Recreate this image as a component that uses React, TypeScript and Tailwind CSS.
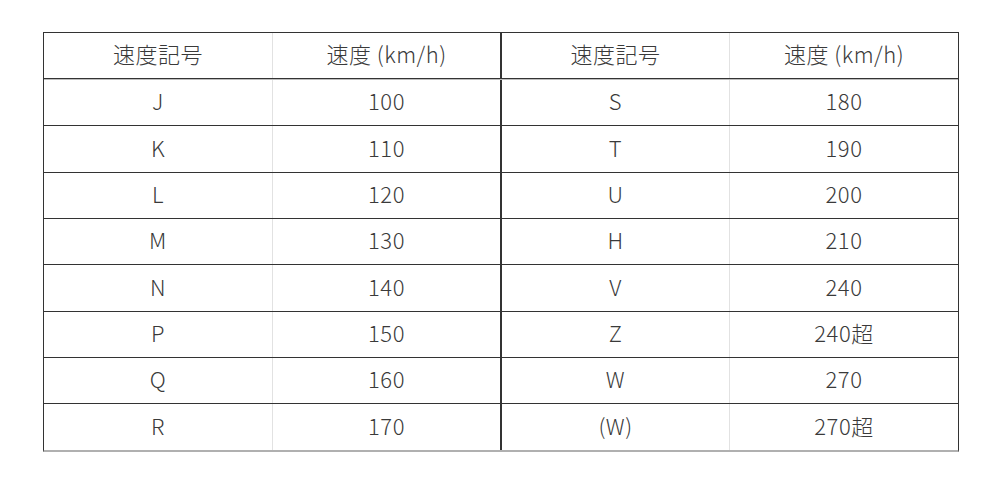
import React from "react";

// Speed symbol table: two symbol/speed pairs per row.
const ROWS: [string, string, string, string][] = [
  ["J", "100", "S", "180"],
  ["K", "110", "T", "190"],
  ["L", "120", "U", "200"],
  ["M", "130", "H", "210"],
  ["N", "140", "V", "240"],
  ["P", "150", "Z", "240超"],
  ["Q", "160", "W", "270"],
  ["R", "170", "(W)", "270超"],
];

const HEIGHTS = ["h-[46px]", "h-[47px]", "h-[46px]", "h-[46px]", "h-[47px]", "h-[46px]", "h-[46px]", "h-[46px]"];

function Row({ cells, height, last }: { cells: string[]; height: string; last?: boolean }) {
  return (
    <div className={`flex ${height} ${last ? "" : "border-b border-[#333]"}`}>
      <div className="w-[229px] border-r border-[#e2e2e2] flex items-center justify-center pb-[4px]">{cells[0]}</div>
      <div className="w-[229px] border-r-2 border-[#333] flex items-center justify-center pb-[4px]">{cells[1]}</div>
      <div className="w-[228px] border-r border-[#e2e2e2] flex items-center justify-center pb-[4px]">{cells[2]}</div>
      <div className="w-[228px] flex items-center justify-center pb-[4px]">{cells[3]}</div>
    </div>
  );
}

export default function App() {
  return (
    <div className="min-h-[483px] bg-white pt-[32px] pl-[43px]">
      <div
        className="w-[916px] border-l border-t border-r border-[#333] border-b-2 border-b-[#b0b0b0] text-[22px] font-extralight tracking-[0.5px] text-[#3a3a3a]"
        style={{ fontFamily: '"Noto Sans CJK JP", "Noto Sans", sans-serif' }}
      >
        <Row cells={["速度記号", "速度 (km/h)", "速度記号", "速度 (km/h)"]} height="h-[46px]" />
        <div className="h-px bg-[#bdbdbd]" />
        {ROWS.map((r, i) => (
          <Row key={r[0] + i} cells={r} height={HEIGHTS[i]} last={i === ROWS.length - 1} />
        ))}
      </div>
    </div>
  );
}
